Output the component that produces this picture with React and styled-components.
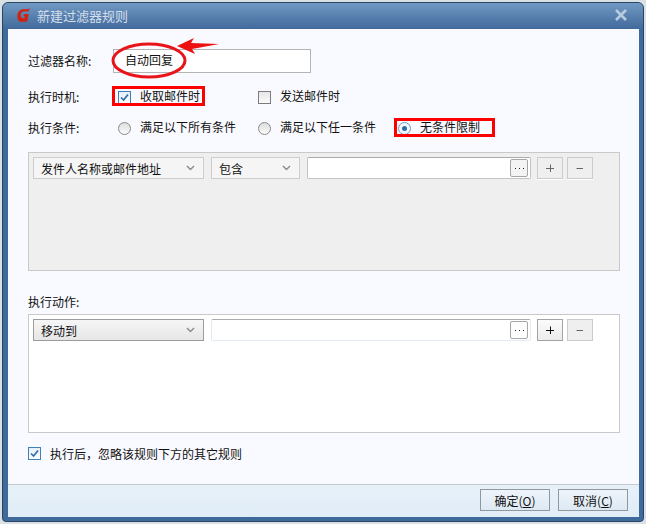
import styled, { createGlobalStyle, css } from "styled-components";

const GlobalStyle = createGlobalStyle`
  html, body {
    margin: 0;
    padding: 0;
    background: #d9e0e6;
  }

  body {
    font-family: "Noto Sans CJK SC", "Liberation Sans", sans-serif;
    font-size: 12px;
    color: #111;
  }
`;

const Page = styled.div`
  width: 646px;
  height: 524px;
  padding: 2px;
  box-sizing: border-box;
  overflow: hidden;
`;

const Window = styled.div`
  position: relative;
  display: flex;
  flex-direction: column;
  height: 520px;
  box-sizing: border-box;
  padding: 0 4px 4px 5px;
  border: 1px solid #2b4560;
  border-radius: 6px 6px 4px 4px;
  background: #3f6b9c;
`;

const TitleBar = styled.div`
  display: flex;
  align-items: center;
  flex: none;
  height: 26px;
  margin: 0 -4px 0 -5px;
  padding: 0 15px 2px 14px;
  box-sizing: border-box;
  border-radius: 5px 5px 0 0;
  background: linear-gradient(#7099c3, #41699b);
  color: #d3dfea;
  font-size: 13px;
  gap: 6px;
`;

const Title = styled.span`
  flex: 1;
`;

const Body = styled.div`
  flex: 1;
  padding: 20px 19px 0 20px;
  background: #f9faff;
`;

const NameRow = styled.div`
  display: flex;
  align-items: center;
  height: 24px;
  margin-bottom: 14px;
`;

const OptionRow = styled.div`
  display: flex;
  align-items: center;
  height: 20px;
  margin-bottom: ${(p) => p.$gap}px;
`;

const Label = styled.span`
  width: 85px;
  flex: none;
  padding-bottom: 2px;
`;

const NameInput = styled.input`
  width: 198px;
  height: 24px;
  box-sizing: border-box;
  padding: 0 11px 3px;
  border: 1px solid #b4b4b4;
  background: #fff;
  font: inherit;
  color: #111;
  outline: none;
`;

const Option = styled.label`
  display: flex;
  align-items: center;
  gap: 9px;
  width: 140px;
  margin-left: ${(p) => p.$indent || 0}px;
`;

const OptionText = styled.span`
  padding-bottom: ${(p) => p.$lift ?? 3}px;
`;

const CheckBox = styled.span`
  display: flex;
  align-items: center;
  justify-content: center;
  flex: none;
  width: 13px;
  height: 13px;
  box-sizing: border-box;
  border: 1px solid #7c7c7c;
  background: linear-gradient(#e6e6e6, #fafafa);

  ${(p) =>
    p.$checked &&
    css`
      border-color: #3f80bb;
      background: linear-gradient(#e6eff8, #fbfdff);
    `}
`;

const Radio = styled.span`
  display: flex;
  align-items: center;
  justify-content: center;
  flex: none;
  width: 13px;
  height: 13px;
  box-sizing: border-box;
  border: 1px solid #8a8a8a;
  border-radius: 50%;
  background: linear-gradient(#dedede, #fafafa);

  ${(p) =>
    p.$checked &&
    css`
      border-color: #6e9cc6;
      background: #f2f7fc;

      &::after {
        content: "";
        width: 5px;
        height: 5px;
        border-radius: 50%;
        background: #2b6cab;
      }
    `}
`;

const RulePanel = styled.div`
  display: flex;
  align-items: flex-start;
  height: ${(p) => p.$height}px;
  box-sizing: border-box;
  padding: 4px;
  border: 1px solid #c9c9c9;
  background: ${(p) => (p.$muted ? "#efefef" : "#fff")};
`;

const SelectBox = styled.div`
  display: flex;
  align-items: center;
  justify-content: space-between;
  flex: none;
  width: ${(p) => p.$width}px;
  height: 22px;
  box-sizing: border-box;
  margin-right: 7px;
  padding: 0 8px 0 7px;
  border: 1px solid ${(p) => (p.$active ? "#9c9c9c" : "#cdcdcd")};
  background: ${(p) =>
    p.$active ? "linear-gradient(#f6f6f6, #e6e6e6)" : "#f5f5f5"};
`;

const ValueField = styled.div`
  display: flex;
  align-items: center;
  justify-content: flex-end;
  flex: none;
  width: ${(p) => p.$width}px;
  height: 22px;
  box-sizing: border-box;
  margin-right: 6px;
  padding-right: 2px;
  background: #fff;
  border: 1px solid ${(p) => (p.$active ? "#e3e9f0" : "#c4c4c4")};
  border-top-color: #ababab;
  border-radius: 2px;
`;

const MoreButton = styled.span`
  display: flex;
  align-items: center;
  justify-content: center;
  gap: 3px;
  width: 18px;
  height: 18px;
  box-sizing: border-box;
  border: 1px solid #a6a6a6;
  border-radius: 2px;
  background: ${(p) => (p.$active ? "#fdfdfd" : "#f4f4f4")};
`;

const MoreDot = styled.i`
  width: 1px;
  height: 1px;
  background: #222;
`;

const StepButton = styled.span`
  display: flex;
  align-items: center;
  justify-content: center;
  flex: none;
  width: 26px;
  height: 22px;
  box-sizing: border-box;
  margin-right: 4px;
  border: 1px solid #cbcbcb;
  box-shadow: 0 1px 0 #fff;
  background: #efefef;
  color: #666;

  ${(p) =>
    p.$active &&
    css`
      border-color: #a3a3a3;
      background: linear-gradient(#fbfbfb, #ececec);
      color: #111;
    `}
`;

const SectionLabel = styled.div`
  height: 16px;
  line-height: 16px;
  margin: 23px 0 4px;
`;

const IgnoreRow = styled.label`
  display: flex;
  align-items: center;
  gap: 9px;
  height: 16px;
  margin-top: 12px;
`;

const Footer = styled.div`
  display: flex;
  align-items: flex-start;
  justify-content: flex-end;
  flex: none;
  gap: 8px;
  height: 33px;
  box-sizing: border-box;
  padding: 4px 11px 0 0;
  border-top: 1px solid #c6c9cc;
  background: linear-gradient(#e7f1fa, #e0ecf6);
`;

const FooterButton = styled.button`
  width: 70px;
  height: 22px;
  padding: 0;
  border: 1px solid #8f979f;
  background: linear-gradient(#eef4fa, #dde9f4);
  font: inherit;
  color: #111;
`;

const Highlight = styled.div`
  position: absolute;
  left: ${(p) => p.$left}px;
  top: ${(p) => p.$top}px;
  width: ${(p) => p.$width}px;
  height: ${(p) => p.$height}px;
  box-sizing: border-box;
  border: 3px solid #f00;
  pointer-events: none;
`;

const Markup = styled.svg`
  position: absolute;
  left: -3px;
  top: -3px;
  pointer-events: none;
`;

const Logo = () => (
  <svg width="14" height="15" viewBox="0 0 16 16" preserveAspectRatio="none">
    <path
      d="M15 0.5 L12.8 3.8 H7.6 C5.8 3.8 4.6 5 4.3 7 C4 9.2 4.9 10.8 6.6 10.8 H8.6 L9 8.8 H6.9 L8.4 6.4 H13.4 L11.6 14.6 H5 C1.8 14.6 0 11.6 0.5 7.6 C1.1 3.6 3.8 1.2 7.4 1.2 H11.6 Z"
      fill="#d2220f"
    />
  </svg>
);

const CloseIcon = () => (
  <svg width="14" height="14" viewBox="0 0 14 14">
    <path d="M2 2 L12 12 M12 2 L2 12" stroke="#b7cbdf" strokeWidth="2.6" fill="none" />
  </svg>
);

const Tick = () => (
  <svg width="11" height="11" viewBox="0 0 11 11">
    <path d="M2 5.5 L4.6 8 L9 2.5" stroke="#2f6ea8" strokeWidth="1.7" fill="none" />
  </svg>
);

const Chevron = () => (
  <svg width="9" height="6" viewBox="0 0 9 6">
    <path d="M1 1 L4.5 4.5 L8 1" stroke="#8a8a8a" strokeWidth="1.4" fill="none" />
  </svg>
);

const Glyph = ({ plus }) => (
  <svg width="8" height="8" viewBox="0 0 8 8">
    <path d={plus ? "M0 4.5 H8 M4.5 0.5 V8" : "M0.5 4.5 H7"} stroke="currentColor" strokeWidth="1" fill="none" />
  </svg>
);

const Select = ({ width, active, children }) => (
  <SelectBox $width={width} $active={active}>
    <OptionText $lift={0}>{children}</OptionText>
    <Chevron />
  </SelectBox>
);

const More = ({ active }) => (
  <MoreButton $active={active}>
    <MoreDot />
    <MoreDot />
    <MoreDot />
  </MoreButton>
);

const App = () => {
  return (
    <Page>
      <GlobalStyle />
      <Window>
        <TitleBar>
          <Logo />
          <Title>新建过滤器规则</Title>
          <CloseIcon />
        </TitleBar>

        <Body>
          <NameRow>
            <Label>过滤器名称:</Label>
            <NameInput defaultValue="自动回复" />
          </NameRow>

          <OptionRow $gap={11}>
            <Label>执行时机:</Label>
            <Option $indent={5}>
              <CheckBox $checked>
                <Tick />
              </CheckBox>
              <OptionText>收取邮件时</OptionText>
            </Option>
            <Option>
              <CheckBox />
              <OptionText>发送邮件时</OptionText>
            </Option>
          </OptionRow>

          <OptionRow $gap={14}>
            <Label>执行条件:</Label>
            <Option $indent={5}>
              <Radio />
              <OptionText>满足以下所有条件</OptionText>
            </Option>
            <Option>
              <Radio />
              <OptionText>满足以下任一条件</OptionText>
            </Option>
            <Option>
              <Radio $checked />
              <OptionText>无条件限制</OptionText>
            </Option>
          </OptionRow>

          <RulePanel $muted $height={119}>
            <Select width={171}>发件人名称或邮件地址</Select>
            <Select width={89}>包含</Select>
            <ValueField $width={224}>
              <More />
            </ValueField>
            <StepButton>
              <Glyph plus />
            </StepButton>
            <StepButton>
              <Glyph />
            </StepButton>
          </RulePanel>

          <SectionLabel>执行动作:</SectionLabel>

          <RulePanel $height={119}>
            <Select width={171} active>
              移动到
            </Select>
            <ValueField $width={320} $active>
              <More active />
            </ValueField>
            <StepButton $active>
              <Glyph plus />
            </StepButton>
            <StepButton>
              <Glyph />
            </StepButton>
          </RulePanel>

          <IgnoreRow>
            <CheckBox $checked>
              <Tick />
            </CheckBox>
            <OptionText $lift={0}>执行后，忽略该规则下方的其它规则</OptionText>
          </IgnoreRow>
        </Body>

        <Footer>
          <FooterButton>
            确定(<u>O</u>)
          </FooterButton>
          <FooterButton>
            取消(<u>C</u>)
          </FooterButton>
        </Footer>

        <Highlight $left={109} $top={83} $width={93} $height={20} />
        <Highlight $left={391} $top={115} $width={101} $height={19} />

        <Markup width="230" height="90" viewBox="0 0 230 90">
          <ellipse cx="149" cy="60.5" rx="36" ry="16.5" fill="none" stroke="#e8141a" strokeWidth="3" />
          <polygon points="177,46 194,38 191,43 219,44 192,49 195,54" fill="#ee1111" />
        </Markup>
      </Window>
    </Page>
  );
};

export default App;
